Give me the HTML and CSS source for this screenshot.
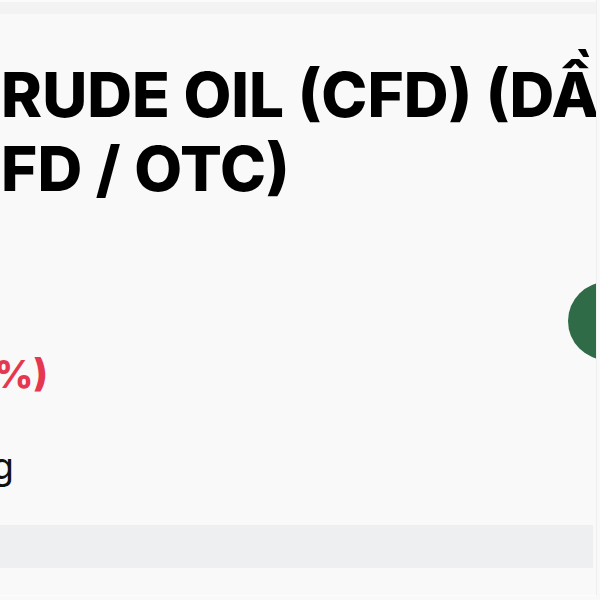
FILE: index.html
```html
<!DOCTYPE html>
<html lang="vi">
<head>
<meta charset="utf-8">
<link rel="stylesheet" href="styles.css">
</head>
<body>
<div class="page">
  <div class="topbar"></div>
  <div class="content">
    <h1 class="title"><span class="line">CRUDE OIL (CFD) (DẦU THÔ WTI)</span><span class="line">CFD / OTC)</span></h1>
    <div class="quote-row">
      <div class="quote-info">
        <div class="change-clip"><span class="change">-0,42 (-0,58%)</span></div>
        <div class="status-clip"><span class="status">Thị trường đang đóng</span></div>
      </div>
      <div class="action-btn"></div>
    </div>
  </div>
  <div class="tabs"></div>
  <div class="footer"></div>
</div>
</body>
</html>
```
FILE: styles.css
```css
html, body {
  margin: 0;
  padding: 0;
  background: #f9f9f9;
  overflow: hidden;
}
body {
  width: 600px;
  height: 600px;
  font-family: Inter, "Noto Sans", "Liberation Sans", sans-serif;
  color: #000;
}
.page {
  width: 596px;
  height: 595px;
  border-right: 1px solid #efefef;
  border-bottom: 1px solid #fdfdfd;
  background: #f9f9f9;
  overflow: hidden;
}
.topbar {
  height: 12px;
  background: #f3f3f3;
  border-top: 2px solid #fbfbfb;
}
.content {
  padding-top: 44px;
}
.title {
  margin: 0;
  font-size: 62px;
  line-height: 74px;
  font-weight: 800;
  white-space: nowrap;
}
.title .line {
  display: block;
  margin-left: -45px;
}
.quote-row {
  display: flex;
  align-items: flex-start;
  justify-content: space-between;
  margin-top: 76px;
  height: 200px;
}
.quote-info {
  display: flex;
  flex-direction: column;
  padding-top: 70px;
}
.change-clip, .status-clip {
  display: flex;
  justify-content: flex-end;
  overflow: hidden;
  white-space: nowrap;
}
.change-clip {
  width: 48px;
}
.change {
  color: #e5384f;
  font-size: 38px;
  line-height: 44px;
  font-weight: 800;
}
.status-clip {
  width: 14px;
  margin-top: 48px;
}
.status {
  font-size: 37px;
  line-height: 44px;
  font-weight: 400;
  color: #111;
}
.action-btn {
  width: 78px;
  height: 78px;
  border-radius: 50%;
  background: #2e6b46;
  margin-right: -50px;
  flex: none;
}
.tabs {
  height: 43px;
  background: #eeeff1;
  margin-top: 43px;
  margin-right: 3px;
}
.footer {
  height: 27px;
}
```
